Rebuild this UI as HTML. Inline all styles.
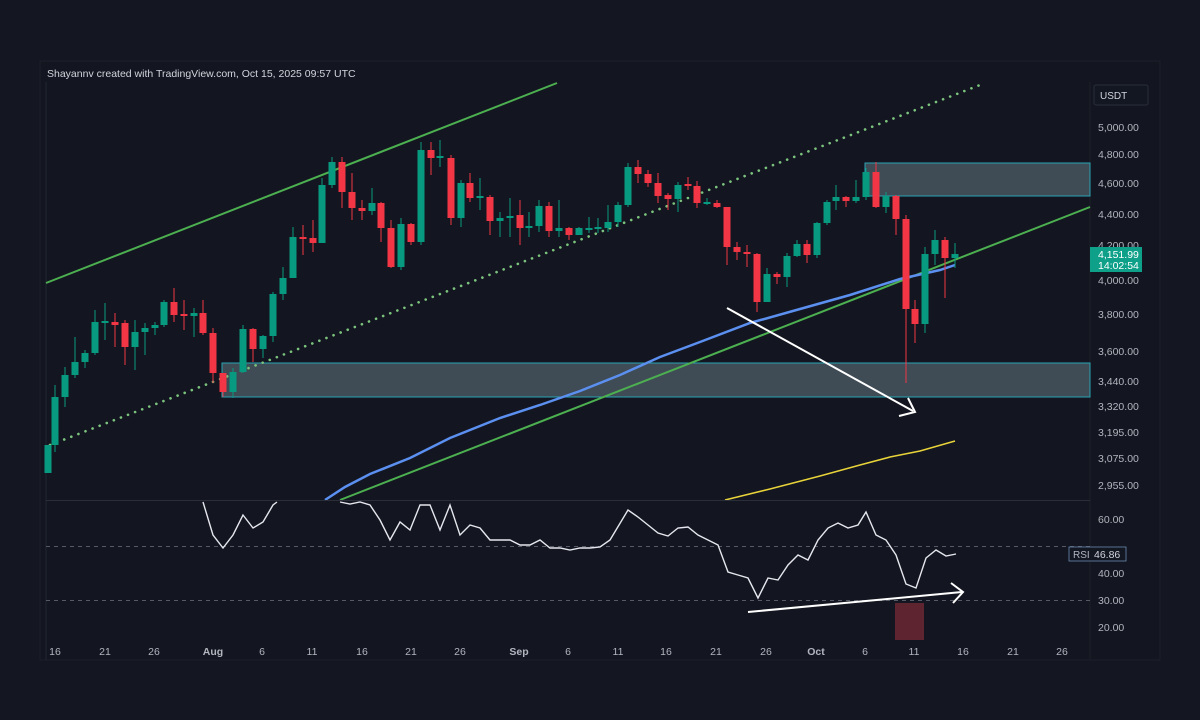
<!DOCTYPE html>
<html><head><meta charset="utf-8"><style>
html,body{margin:0;padding:0;background:#131722;width:1200px;height:720px;overflow:hidden;font-family:"Liberation Sans",sans-serif}
</style></head><body>
<svg width="1200" height="720" viewBox="0 0 1200 720" xmlns="http://www.w3.org/2000/svg" font-family="Liberation Sans, sans-serif">
<rect x="0" y="0" width="1200" height="720" fill="#141722"/>
<rect x="40" y="61" width="1120" height="599" fill="#131620" stroke="#1c1f29"/>
<text x="47" y="77" fill="#d1d4dc" font-size="10.5">Shayannv created with TradingView.com, Oct 15, 2025 09:57 UTC</text>
<line x1="46" y1="82" x2="46" y2="660" stroke="#222530"/>
<line x1="1090" y1="82" x2="1090" y2="660" stroke="#1c1f29"/>
<rect x="222" y="363" width="868" height="34" fill="#5a6e78" fill-opacity="0.62" stroke="#2aa3b5" stroke-width="1"/>
<rect x="865" y="163" width="225" height="33" fill="#5a6e78" fill-opacity="0.62" stroke="#2aa3b5" stroke-width="1"/>
<line x1="46" y1="283" x2="557" y2="83" stroke="#4caf50" stroke-width="2"/>
<line x1="50" y1="445" x2="980" y2="85" stroke="#7cc47e" stroke-width="2.6" stroke-dasharray="0.1,7.5" stroke-linecap="round"/>
<line x1="340" y1="500" x2="1090" y2="207" stroke="#4caf50" stroke-width="2"/>
<polyline points="325,500 345,487 370,474 410,458 450,438 500,418 540,405 580,391 620,375 660,357 700,342 750,323 800,309 850,295 900,279 940,270 955,265" fill="none" stroke="#5b8ff0" stroke-width="2.5"/>
<polyline points="725,500 770,489 820,476 860,465 890,457 920,451 955,441" fill="none" stroke="#e8d33a" stroke-width="1.6"/>
<g id="c"></g>
<line x1="727" y1="308" x2="913" y2="411" stroke="#fff" stroke-width="2"/>
<polyline points="908,398 915,412 899,416" fill="none" stroke="#fff" stroke-width="2"/>
<rect x="1094" y="85" width="54" height="20" rx="2" fill="#131722" stroke="#2a2e39"/>
<text x="1100" y="99" fill="#d1d4dc" font-size="10">USDT</text>
<g fill="#b2b5be" font-size="10.5">
<text x="1098" y="131">5,000.00</text><text x="1098" y="158">4,800.00</text><text x="1098" y="187">4,600.00</text><text x="1098" y="218">4,400.00</text><text x="1098" y="249">4,200.00</text><text x="1098" y="284">4,000.00</text><text x="1098" y="318">3,800.00</text><text x="1098" y="355">3,600.00</text><text x="1098" y="385">3,440.00</text><text x="1098" y="410">3,320.00</text><text x="1098" y="436">3,195.00</text><text x="1098" y="462">3,075.00</text><text x="1098" y="489">2,955.00</text>
<text x="1098" y="523">60.00</text><text x="1098" y="577">40.00</text><text x="1098" y="604">30.00</text><text x="1098" y="631">20.00</text>
</g>
<rect x="1090" y="247" width="52" height="25" fill="#0fa08a"/>
<text x="1098" y="258" fill="#fff" font-size="10.5">4,151.99</text>
<text x="1098" y="269" fill="#fff" font-size="10.5">14:02:54</text>
<line x1="46" y1="500.5" x2="1090" y2="500.5" stroke="#2a2e39"/>
<line x1="46" y1="546.5" x2="1090" y2="546.5" stroke="#555a66" stroke-dasharray="4,4"/>
<line x1="46" y1="600.5" x2="1090" y2="600.5" stroke="#555a66" stroke-dasharray="4,4"/>
<rect x="895" y="603" width="29" height="37" fill="#5e2530"/>
<polyline fill="none" stroke="#e6e6ee" stroke-width="1.4" points="203,502 213,535 223,548 233,535 243,515 253,528 263,522 273,505 277,502"/>
<polyline fill="none" stroke="#e6e6ee" stroke-width="1.4" points="340,502 350,504 360,502 370,505 380,520 390,540 400,522 410,530 420,505 430,505 440,530 450,505 460,535 470,525 480,528 490,540 500,540 510,540 520,545 530,545 540,540 550,548 560,548 570,550 580,548 590,548 600,547 610,540 628,510 638,517 648,525 658,533 668,536 678,528 688,527 698,535 708,540 718,545 728,572 738,575 748,578 758,598 768,578 778,580 788,565 798,555 808,560 818,540 828,528 838,523 848,528 858,525 866,512 876,535 886,540 896,555 906,584 916,588 926,558 936,550 946,556 956,554"/>
<line x1="748" y1="612" x2="962" y2="592" stroke="#fff" stroke-width="2"/>
<polyline points="951,583 963,592 953,603" fill="none" stroke="#fff" stroke-width="2"/>
<rect x="1069" y="547" width="57" height="14" fill="#131722" stroke="#6a8ab0" stroke-width="0.8"/>
<text x="1073" y="558" fill="#b2b5be" font-size="10">RSI</text>
<text x="1094" y="558" fill="#d1d4dc" font-size="10.5">46.86</text>
<g fill="#b2b5be" font-size="10.5" text-anchor="middle">
<text x="55" y="655">16</text><text x="105" y="655">21</text><text x="154" y="655">26</text><text x="213" y="655" font-weight="bold">Aug</text><text x="262" y="655">6</text><text x="312" y="655">11</text><text x="362" y="655">16</text><text x="411" y="655">21</text><text x="460" y="655">26</text><text x="519" y="655" font-weight="bold">Sep</text><text x="568" y="655">6</text><text x="618" y="655">11</text><text x="666" y="655">16</text><text x="716" y="655">21</text><text x="766" y="655">26</text><text x="816" y="655" font-weight="bold">Oct</text><text x="865" y="655">6</text><text x="914" y="655">11</text><text x="963" y="655">16</text><text x="1013" y="655">21</text><text x="1062" y="655">26</text>
</g>
</svg>
<script>
var d=[
[48,'g',445,473,445,473],[55,'g',397,445,385,452],[65,'g',375,397,367,407],[75,'g',362,375,337,378],[85,'g',353,362,350,368],[95,'g',322,353,310,355],[105,'g',321,323,303,340],[115,'r',322,325,313,347],[125,'r',323,347,320,365],[135,'g',332,347,320,370],[145,'g',328,332,323,355],[155,'g',325,328,322,335],[164,'g',302,325,300,327],[174,'r',302,315,288,322],[184,'r',314,316,300,330],[194,'g',313,316,308,337],[203,'r',313,333,300,335],[213,'r',333,373,328,383],[223,'r',373,392,373,397],[233,'g',372,392,368,398],[243,'g',329,372,325,373],[253,'r',329,349,328,362],[263,'g',336,349,335,358],[273,'g',294,336,292,342],[283,'g',278,294,267,300],[293,'g',237,278,227,278],[303,'r',237,238,225,255],[313,'r',238,243,220,252],[322,'g',185,243,178,243],[332,'g',162,185,157,188],[342,'r',162,192,157,208],[352,'r',192,208,173,220],[362,'r',208,211,200,220],[372,'g',203,211,188,215],[381,'r',203,228,202,242],[391,'r',228,267,220,268],[401,'g',224,267,218,270],[411,'r',224,242,223,245],[421,'g',150,242,142,245],[431,'r',150,158,142,175],[440,'g',156,158,140,167],[451,'r',158,218,155,225],[461,'g',183,218,180,227],[470,'r',183,198,173,202],[480,'g',196,198,178,210],[490,'r',197,221,195,235],
[500,'g',218,221,212,237],[510,'g',216,218,198,237],[520,'r',215,228,200,245],[529,'g',226,227,212,237],[539,'g',206,226,200,232],[549,'r',206,231,202,237],[559,'g',228,231,200,237],[569,'r',228,235,227,240],[579,'g',228,235,227,235],[589,'g',228,229,217,233],[598,'g',227,229,218,233],[608,'g',222,228,205,232],[618,'g',205,222,202,227],[628,'g',167,205,163,207],[638,'r',167,174,160,183],[648,'r',174,183,170,187],[658,'r',183,196,173,203],[668,'r',195,199,193,210],[678,'g',185,199,182,212],[688,'r',184,186,177,190],[697,'r',186,203,181,208],[707,'g',202,204,198,205],[717,'r',203,207,200,208],[727,'r',207,247,207,265],[737,'r',247,252,242,260],[747,'r',252,254,245,267],[757,'r',254,302,253,312],[767,'g',274,302,268,302],[777,'r',274,277,272,284],[787,'g',256,277,253,287],[797,'g',244,256,240,257],[807,'r',244,255,240,263],[817,'g',223,255,222,258],[827,'g',202,223,200,225],[836,'g',197,201,185,210],[846,'r',197,201,196,207],[856,'g',197,201,180,203],[866,'g',172,197,168,200],[876,'r',172,207,162,208],[886,'g',196,207,192,213],[896,'r',196,219,195,235],[906,'r',219,309,215,383],[915,'r',309,324,300,343],[925,'g',254,324,247,333],[935,'g',240,254,230,265],[945,'r',240,258,237,298],[955,'g',254,258,243,268]];
var s='';d.forEach(function(c){var col=c[1]=='g'?'#089981':'#f23645';var h=Math.max(c[3]-c[2],2);s+='<line x1="'+c[0]+'" y1="'+c[4]+'" x2="'+c[0]+'" y2="'+c[5]+'" stroke="'+col+'" stroke-width="1"/><rect x="'+(c[0]-3.5)+'" y="'+c[2]+'" width="7" height="'+h+'" fill="'+col+'"/>';});
document.getElementById('c').innerHTML=s;
</script>
</body></html>
